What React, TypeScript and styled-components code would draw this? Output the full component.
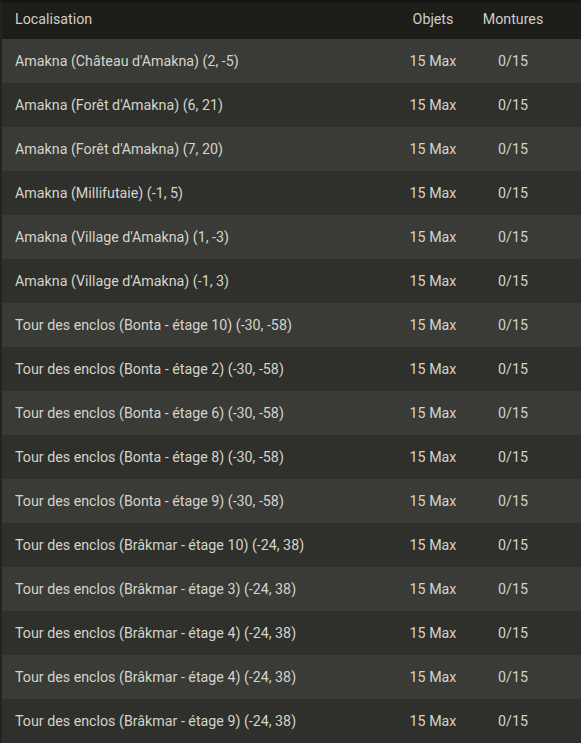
import React from 'react';
import styled, { createGlobalStyle } from 'styled-components';

const GlobalStyle = createGlobalStyle`
  html, body {
    margin: 0;
    padding: 0;
    background: #2a2a27;
  }
  body {
    font-family: Roboto, 'Noto Sans', 'Liberation Sans', sans-serif;
  }
`;

const Panel = styled.div`
  width: 581px;
  height: 743px;
  overflow: hidden;
  background: #2c2c29;
  border-top: 3px solid #171715;
  border-left: 2px solid #232320;
  box-sizing: border-box;
  color: #d4d4cc;
  font-size: 14.25px;
`;

const HeaderRow = styled.div`
  display: grid;
  grid-template-columns: 1fr 80px 80px;
  align-items: center;
  height: 32px;
  padding: 0 28px 4px 13px;
  background: #1d1d1a;
  color: #cfcfc7;
`;

const Row = styled.div<{ $light: boolean }>`
  display: grid;
  grid-template-columns: 1fr 80px 80px;
  align-items: center;
  height: 44px;
  padding: 0 28px 0 13px;
  background: ${(props) => (props.$light ? '#3a3a36' : '#2f2f2b')};
`;

const Cell = styled.div<{ $center?: boolean }>`
  text-align: ${(props) => (props.$center ? 'center' : 'left')};
  white-space: nowrap;
`;

const enclos = [
  'Amakna (Château d\'Amakna) (2, -5)',
  'Amakna (Forêt d\'Amakna) (6, 21)',
  'Amakna (Forêt d\'Amakna) (7, 20)',
  'Amakna (Millifutaie) (-1, 5)',
  'Amakna (Village d\'Amakna) (1, -3)',
  'Amakna (Village d\'Amakna) (-1, 3)',
  'Tour des enclos (Bonta - étage 10) (-30, -58)',
  'Tour des enclos (Bonta - étage 2) (-30, -58)',
  'Tour des enclos (Bonta - étage 6) (-30, -58)',
  'Tour des enclos (Bonta - étage 8) (-30, -58)',
  'Tour des enclos (Bonta - étage 9) (-30, -58)',
  'Tour des enclos (Brâkmar - étage 10) (-24, 38)',
  'Tour des enclos (Brâkmar - étage 3) (-24, 38)',
  'Tour des enclos (Brâkmar - étage 4) (-24, 38)',
  'Tour des enclos (Brâkmar - étage 4) (-24, 38)',
  'Tour des enclos (Brâkmar - étage 9) (-24, 38)',
];

const App = () => {
  return (
    <>
      <GlobalStyle />
      <Panel>
        <HeaderRow>
          <Cell>Localisation</Cell>
          <Cell $center>Objets</Cell>
          <Cell $center>Montures</Cell>
        </HeaderRow>
        {enclos.map((name, i) => (
          <Row key={i} $light={i % 2 === 0}>
            <Cell>{name}</Cell>
            <Cell $center>15 Max</Cell>
            <Cell $center>0/15</Cell>
          </Row>
        ))}
      </Panel>
    </>
  );
};

export default App;
